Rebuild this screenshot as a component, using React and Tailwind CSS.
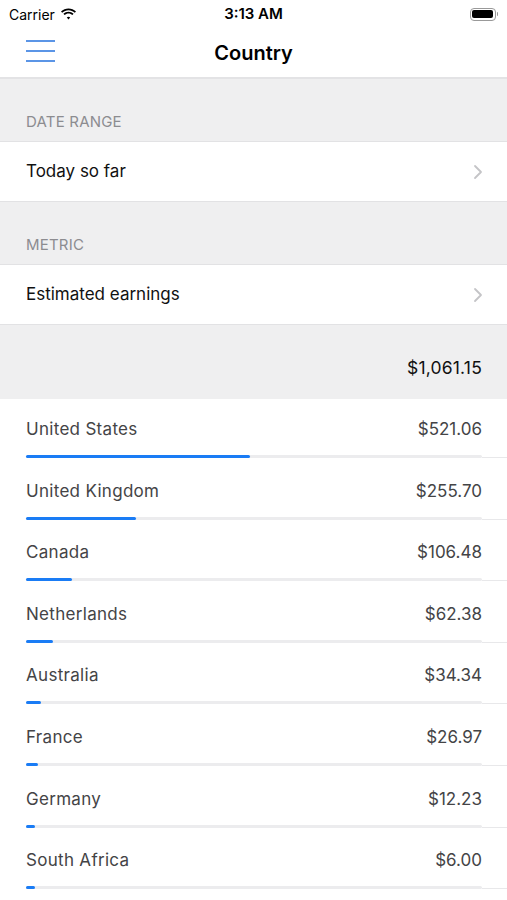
import React from "react";

const total = 1061.15;

const rows = [
  { name: "United States", value: 521.06 },
  { name: "United Kingdom", value: 255.7 },
  { name: "Canada", value: 106.48 },
  { name: "Netherlands", value: 62.38 },
  { name: "Australia", value: 34.34 },
  { name: "France", value: 26.97 },
  { name: "Germany", value: 12.23 },
  { name: "South Africa", value: 6.0 },
];

const money = (v) =>
  "$" + v.toLocaleString("en-US", { minimumFractionDigits: 2, maximumFractionDigits: 2 });

const Chevron = () => (
  <svg width="10" height="16" viewBox="0 0 10 16" fill="none">
    <path d="M2 2l6 6-6 6" stroke="#c4c4c7" strokeWidth="1.8" strokeLinecap="round" strokeLinejoin="round" />
  </svg>
);

const SectionHeader = ({ children }) => (
  <div className="h-[62px] bg-[#efeff0] px-[26px] flex items-end pb-[8px] text-[15px] text-[#8c8c90] tracking-[0.2px]">
    {children}
  </div>
);

const PickerRow = ({ label }) => (
  <div className="h-[61px] bg-white flex items-center justify-between pl-[26px] pr-[24px] border-t border-b border-[#e2e2e4]">
    <span className="text-[17px] text-[#111]">{label}</span>
    <Chevron />
  </div>
);

const CountryRow = ({ name, value }) => {
  const w = Math.max((value / total) * 456, 9);
  return (
    <div className="h-[61.6px] pl-[26px] flex flex-col">
      <div className="flex justify-between items-center pr-[25px] pt-[19px] text-[17px] text-[#444446] leading-[22px]">
        <span className="tracking-[0.3px]">{name}</span>
        <span>{money(value)}</span>
      </div>
      {/* bar + separator */}
      <div className="mt-[15px] flex items-end">
        <div className="w-[456px] h-[3px] rounded-full bg-[#ececee]">
          <div className="h-[3px] rounded-full bg-[#1a7cf5]" style={{ width: w }} />
        </div>
        <div className="flex-1 h-px bg-[#e8e8ea]" />
      </div>
    </div>
  );
};

export default function App() {
  return (
    <div className="w-[507px] min-h-[900px] bg-white font-['Inter',sans-serif] overflow-hidden">
      {/* Status bar */}
      <div className="h-[28px] flex items-center justify-between px-[9px] text-[14px] text-black">
        <div className="flex items-center gap-[5px] w-[120px]">
          <span>Carrier</span>
          <svg width="17" height="12" viewBox="0 0 17 12">
            <path d="M8.5 2.2c2.4 0 4.6.9 6.3 2.5l1.2-1.3C13.9 1.4 11.3.4 8.5.4S3.1 1.4 1 3.4l1.2 1.3c1.7-1.6 3.9-2.5 6.3-2.5z" fill="#000" />
            <path d="M8.5 5.6c1.5 0 2.8.6 3.9 1.5l1.2-1.3c-1.4-1.2-3.2-2-5.1-2s-3.7.8-5.1 2l1.2 1.3c1.1-.9 2.4-1.5 3.9-1.5z" fill="#000" />
            <path d="M8.5 8.8c.7 0 1.3.3 1.7.7L8.5 11.4 6.8 9.5c.4-.4 1-.7 1.7-.7z" fill="#000" />
          </svg>
        </div>
        <span className="text-[15px] font-semibold">3:13 AM</span>
        <div className="w-[120px] flex justify-end">
          <div className="flex items-center">
            <div className="w-[26px] h-[13px] rounded-[4px] border border-[#999] p-[1.5px]">
              <div className="w-full h-full rounded-[2px] bg-black" />
            </div>
            <div className="w-[1.5px] h-[4px] bg-[#999] rounded-r-sm ml-[1px]" />
          </div>
        </div>
      </div>

      {/* Nav bar */}
      <div className="h-[51px] relative flex items-center justify-center border-b-2 border-[#e3e3e5]">
        <div className="absolute left-[26px] top-[12px] flex flex-col gap-[8px]">
          <div className="w-[29px] h-[2px] bg-[#5b95e6]" />
          <div className="w-[29px] h-[2px] bg-[#5b95e6]" />
          <div className="w-[29px] h-[2px] bg-[#5b95e6]" />
        </div>
        <span className="text-[20px] font-semibold text-black">Country</span>
      </div>

      <SectionHeader>DATE RANGE</SectionHeader>
      <PickerRow label="Today so far" />
      <SectionHeader>METRIC</SectionHeader>
      <PickerRow label="Estimated earnings" />

      {/* Total */}
      <div className="h-[74px] bg-[#efeff0] flex items-center justify-end pr-[25px] pt-[12px] text-[17.5px] text-[#111] tracking-[0.2px]">
        {money(total)}
      </div>

      {rows.map((r) => (
        <CountryRow key={r.name} {...r} />
      ))}
    </div>
  );
}
